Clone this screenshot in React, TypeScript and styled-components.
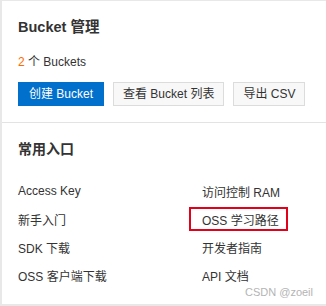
import React from 'react';
import styled, { createGlobalStyle } from 'styled-components';

const GlobalStyle = createGlobalStyle`
  html, body {
    margin: 0;
    padding: 0;
    background: #e8e8e8;
  }
  body {
    font-family: "Liberation Sans", "Noto Sans CJK SC", sans-serif;
    color: #333;
  }
`;

const Page = styled.div`
  width: 326px;
  height: 306px;
  box-sizing: border-box;
  padding: 1px 0 2px 2px;
  background: #e8e8e8;
`;

const Card = styled.div`
  position: relative;
  height: 100%;
  background: #fff;
  display: flex;
  flex-direction: column;
`;

const Section = styled.section`
  padding: 16px;
  display: flex;
  flex-direction: column;
`;

const Title = styled.h2`
  margin: 0;
  font-size: 14.5px;
  line-height: 20px;
  font-weight: bold;
  color: #333;
`;

const Count = styled.p`
  margin: 16px 0 0;
  font-size: 12px;
  line-height: 18px;

  span {
    color: #ff6a00;
  }
`;

const Toolbar = styled.div`
  display: flex;
  gap: 9px;
  margin-top: 11px;
`;

const Button = styled.button<{ $primary?: boolean }>`
  height: 24px;
  padding: 0 ${({ $primary }) => ($primary ? '10px' : '9px')};
  font-family: inherit;
  font-size: 12px;
  line-height: 22px;
  border: 1px solid ${({ $primary }) => ($primary ? '#0070cc' : '#dcdcdc')};
  background: ${({ $primary }) => ($primary ? '#0070cc' : '#f8f8f8')};
  color: ${({ $primary }) => ($primary ? '#fff' : '#333')};
  border-radius: 0;
  cursor: pointer;
`;

const Divider = styled.hr`
  margin: 0;
  border: none;
  border-top: 1px solid #e3e3e3;
`;

const SectionTitle = styled.h3`
  margin: 0;
  font-size: 14px;
  line-height: 20px;
  font-weight: bold;
  color: #333;
`;

const Links = styled.div`
  display: grid;
  grid-template-columns: 184px 1fr;
  grid-auto-rows: 28px;
  margin-top: 18px;
`;

const LinkItem = styled.a<{ $marked?: boolean }>`
  display: flex;
  align-items: center;
  font-size: 12px;
  color: #333;
  text-decoration: none;
  ${({ $marked }) =>
    $marked &&
    `
    box-sizing: border-box;
    width: 99px;
    height: 24px;
    margin: 2px 0 0 -13px;
    padding-left: 11px;
    border: 2px solid #e2001a;
  `}
`;

const Watermark = styled.span`
  position: absolute;
  right: 13px;
  bottom: 6px;
  font-size: 11px;
  color: #b4b4b4;
`;

const links: [string, boolean?][] = [
  ['Access Key'],
  ['访问控制 RAM'],
  ['新手入门'],
  ['OSS 学习路径', true],
  ['SDK 下载'],
  ['开发者指南'],
  ['OSS 客户端下载'],
  ['API 文档'],
];

export default function App() {
  return (
    <>
      <GlobalStyle />
      <Page>
        <Card>
          <Section>
            <Title>Bucket 管理</Title>
            <Count>
              <span>2</span> 个 Buckets
            </Count>
            <Toolbar>
              <Button $primary>创建 Bucket</Button>
              <Button>查看 Bucket 列表</Button>
              <Button>导出 CSV</Button>
            </Toolbar>
          </Section>
          <Divider />
          <Section>
            <SectionTitle>常用入口</SectionTitle>
            <Links>
              {links.map(([label, marked]) => (
                <LinkItem key={label} href="#" $marked={marked}>
                  {label}
                </LinkItem>
              ))}
            </Links>
          </Section>
          <Watermark>CSDN @zoeil</Watermark>
        </Card>
      </Page>
    </>
  );
}
